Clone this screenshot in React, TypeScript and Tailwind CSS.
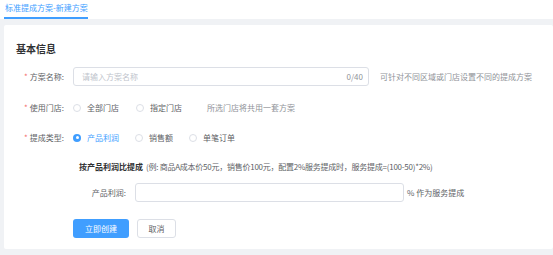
const font = { fontFamily: '"Noto Sans CJK SC", "Noto Sans", sans-serif' };

function Radio({ label, checked }: { label: string; checked?: boolean }) {
  return (
    <div className="flex items-center gap-[6px]">
      <span
        className={
          checked
            ? "flex h-[8px] w-[8px] items-center justify-center rounded-full bg-[#409eff]"
            : "h-[8px] w-[8px] rounded-full border border-[#dcdfe6] bg-white"
        }
      >
        {checked && <span className="h-[3px] w-[3px] rounded-full bg-white" />}
      </span>
      <span className={checked ? "text-[#409eff]" : "text-[#606266]"}>{label}</span>
    </div>
  );
}

function Label({ text, required }: { text: string; required?: boolean }) {
  return (
    <div className="flex w-[48px] shrink-0 items-center justify-end text-[#606266]">
      {required && <span className="mr-[2px] text-[#f56c6c]">*</span>}
      <span>{text}:</span>
    </div>
  );
}

export default function App() {
  return (
    <div
      className="h-[255px] w-[553px] overflow-hidden bg-[#f0f2f5] text-[8px] leading-none"
      style={font}
    >
      <div className="flex h-[19px] bg-white px-[4px]">
        <div className="flex h-full w-[84px] items-center whitespace-nowrap border-b-2 border-[#409eff] pl-[1px] pb-[2px] text-[#409eff]">
          标准提成方案-新建方案
        </div>
      </div>

      <div className="ml-[4px] mt-[6px] h-[224px] rounded-[2px] bg-white pl-[12px] pt-[18px]">
        <div className="h-[12px] text-[10px] font-bold leading-[12px] text-[#303133]">基本信息</div>

        <div className="mt-[12px] flex h-[19px] items-center">
          <Label text="方案名称" required />
          <div className="ml-[9px] flex h-[19px] w-[296px] items-center justify-between rounded-[3px] border border-[#dcdfe6] pl-[8px] pr-[5px]">
            <span className="text-[#c0c4cc]">请输入方案名称</span>
            <span className="text-[#909399]">0/40</span>
          </div>
          <span className="ml-[11px] text-[#909399]">可针对不同区域或门店设置不同的提成方案</span>
        </div>

        <div className="mt-[12px] flex h-[19px] items-center">
          <Label text="使用门店" required />
          <div className="ml-[9px] flex items-center gap-[17px]">
            <Radio label="全部门店" />
            <Radio label="指定门店" />
          </div>
          <span className="ml-[25px] text-[#909399]">所选门店将共用一套方案</span>
        </div>

        <div className="mt-[11px] flex h-[19px] items-center">
          <Label text="提成类型" required />
          <div className="ml-[9px] flex items-center gap-[16px]">
            <Radio label="产品利润" checked />
            <Radio label="销售额" />
            <Radio label="单笔订单" />
          </div>
        </div>

        <div className="ml-[63px] mt-[14px] flex h-[12px] items-center whitespace-nowrap">
          <span className="font-bold text-[#303133]">按产品利润比提成</span>
          <span className="ml-[3px] tracking-[-0.25px] text-[#606266]">
            (例: 商品A成本价50元，销售价100元，配置2%服务提成时，服务提成=(100-50)*2%)
          </span>
        </div>

        <div className="mt-[10px] flex h-[19px] items-center">
          <div className="w-[110px] shrink-0 text-right text-[#606266]">产品利润:</div>
          <div className="ml-[9px] h-[19px] w-[269px] rounded-[3px] border border-[#dcdfe6]" />
          <span className="ml-[3px] text-[#606266]">% 作为服务提成</span>
        </div>

        <div className="ml-[57px] mt-[17px] flex gap-[8px]">
          <button className="flex h-[19px] w-[56px] items-center justify-center rounded-[3px] bg-[#409eff] text-white">
            立即创建
          </button>
          <button className="flex h-[19px] w-[39px] items-center justify-center rounded-[3px] border border-[#dcdfe6] bg-white text-[#606266]">
            取消
          </button>
        </div>
      </div>
    </div>
  );
}
